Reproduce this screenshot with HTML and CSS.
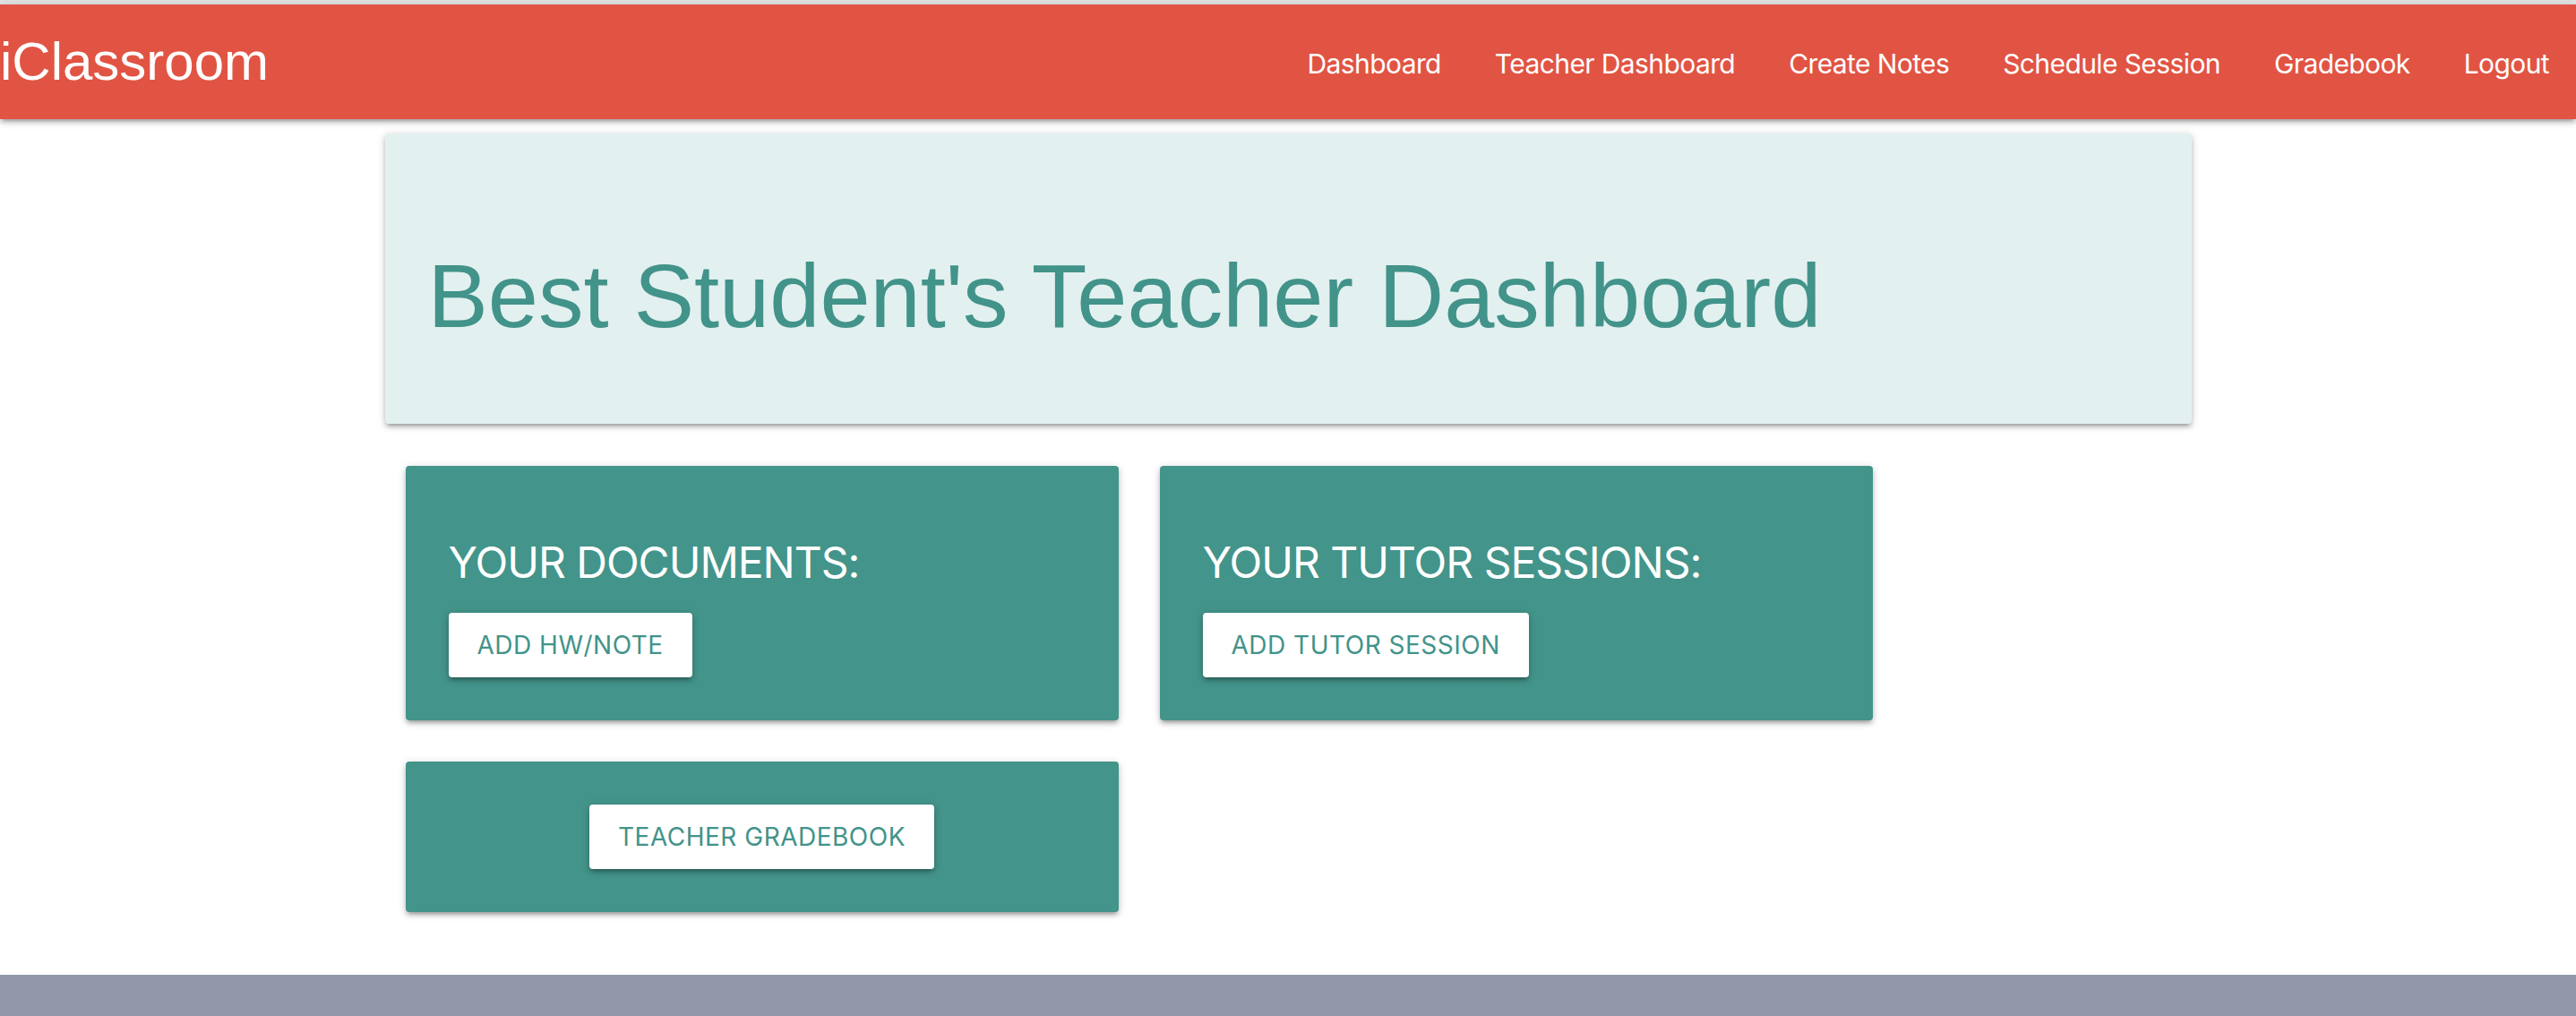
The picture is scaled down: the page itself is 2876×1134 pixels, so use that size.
FILE: index.html
```html
<!DOCTYPE html>
<html lang="en">
<head>
<meta charset="utf-8">
<title>iClassroom</title>
<link rel="stylesheet" href="styles.css">
</head>
<body>
<div class="topstrip"></div>
<nav class="navbar">
  <a class="brand" href="#">iClassroom</a>
  <ul class="nav-links">
    <li><a href="#">Dashboard</a></li>
    <li><a href="#">Teacher Dashboard</a></li>
    <li><a href="#">Create Notes</a></li>
    <li><a href="#">Schedule Session</a></li>
    <li><a href="#">Gradebook</a></li>
    <li><a href="#">Logout</a></li>
  </ul>
</nav>
<main class="container">
  <header class="hero">
    <h1 class="hero-title">Best Student's Teacher Dashboard</h1>
  </header>
  <div class="grid">
    <div class="col">
      <div class="card">
        <h2 class="card-title">YOUR DOCUMENTS:</h2>
        <a class="btn" href="#">ADD HW/NOTE</a>
      </div>
    </div>
    <div class="col">
      <div class="card">
        <h2 class="card-title">YOUR TUTOR SESSIONS:</h2>
        <a class="btn" href="#">ADD TUTOR SESSION</a>
      </div>
    </div>
    <div class="col">
      <div class="card card-center">
        <a class="btn" href="#">TEACHER GRADEBOOK</a>
      </div>
    </div>
  </div>
</main>
<footer class="footer"></footer>
</body>
</html>
```
FILE: styles.css
```css
* { box-sizing: border-box; }
html, body { margin: 0; padding: 0; }
body {
  width: 2876px;
  height: 1134px;
  overflow: hidden;
  background: #ffffff;
  font-family: Inter, "Noto Sans", sans-serif;
  display: flex;
  flex-direction: column;
}
.topstrip {
  height: 5px;
  background: #e4e4e4;
  flex: none;
}
.navbar {
  flex: none;
  height: 128px;
  background: #e15443;
  display: flex;
  align-items: center;
  justify-content: space-between;
  box-shadow: 0 4px 4px rgba(0,0,0,0.14), 0 6px 2px -4px rgba(0,0,0,0.12), 0 2px 10px rgba(0,0,0,0.2);
  position: relative;
  z-index: 2;
}
.brand {
  font-family: "Liberation Sans", Arial, sans-serif;
  font-size: 60px;
  color: #ffffff;
  text-decoration: none;
  padding-left: 0;
  margin-top: -2px;
}
.nav-links {
  list-style: none;
  margin: 0;
  padding: 4px 0 0 0;
  display: flex;
}
.nav-links a {
  display: block;
  padding: 0 30px;
  font-size: 30px;
  letter-spacing: -0.6px;
  color: #ffffff;
  text-decoration: none;
  line-height: 124px;
}
.container {
  width: 2017px;
  margin: 0 auto;
  padding-top: 16px;
  flex: 1;
}
.hero {
  background: #e2f0ef;
  border-radius: 4px;
  height: 324px;
  padding: 121px 48px 0;
  box-shadow: 0 4px 4px rgba(0,0,0,0.14), 0 6px 2px -4px rgba(0,0,0,0.12), 0 2px 10px rgba(0,0,0,0.2);
}
.hero-title {
  margin: 0;
  font-family: "Liberation Sans", Arial, sans-serif;
  font-weight: 400;
  font-size: 101px;
  line-height: 120px;
  color: #42938a;
}
.grid {
  display: flex;
  flex-wrap: wrap;
  row-gap: 46px;
  margin-top: 47px;
}
.col {
  width: 842px;
  padding: 0 23px;
}
.card {
  background: #43948a;
  border-radius: 4px;
  padding: 48px;
  box-shadow: 0 4px 4px rgba(0,0,0,0.14), 0 6px 2px -4px rgba(0,0,0,0.12), 0 2px 10px rgba(0,0,0,0.2);
}
.card-center {
  display: flex;
  justify-content: center;
}
.card-title {
  margin: 28px 0 24px;
  font-size: 48px;
  font-weight: 400;
  letter-spacing: -1px;
  line-height: 64px;
  color: #ffffff;
}
.btn {
  display: inline-block;
  height: 72px;
  line-height: 72px;
  padding: 0 32px;
  background: #ffffff;
  color: #42938a;
  font-size: 28px;
  letter-spacing: 0.5px;
  text-decoration: none;
  border-radius: 4px;
  box-shadow: 0 4px 4px rgba(0,0,0,0.14), 0 6px 2px -4px rgba(0,0,0,0.12), 0 2px 10px rgba(0,0,0,0.2);
}
.footer {
  flex: none;
  height: 46px;
  background: #9297aa;
}
```
